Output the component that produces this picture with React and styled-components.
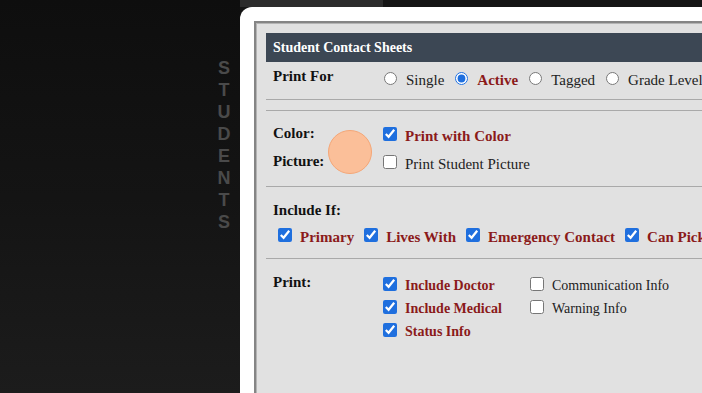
import React from "react";
import styled, { createGlobalStyle } from "styled-components";

const GlobalStyle = createGlobalStyle`
  html, body { margin: 0; padding: 0; background: #131313; overflow: hidden; }
  #root { height: 100vh; }
`;

const Page = styled.div`
  position: relative;
  display: flex;
  width: 702px;
  height: 393px;
  overflow: hidden;
  font-family: "Liberation Serif", "Times New Roman", serif;
`;

const Sidebar = styled.aside`
  width: 240px;
  flex: none;
  box-sizing: border-box;
  padding: 57px 6px 0 0;
  display: flex;
  flex-direction: column;
  align-items: flex-end;
  background: linear-gradient(180deg, #0e0e0e 0%, #141414 50%, #1c1c1c 100%);
`;

const VerticalLabel = styled.div`
  width: 20px;
  display: flex;
  flex-direction: column;
  align-items: center;
  font-family: "Liberation Sans", Arial, sans-serif;
  font-weight: 700;
  font-size: 18px;
  line-height: 22px;
  color: #4a4a4a;
`;

const Main = styled.main`
  flex: 1;
  min-width: 0;
  display: flex;
  flex-direction: column;
  background: #151515;
`;

const TopStrip = styled.div`
  height: 7px;
  flex: none;
  display: flex;
`;

const Tab = styled.div`
  width: 143px;
  background: #2c2c2c;
`;

const Window = styled.section`
  flex: 1;
  min-height: 0;
  display: flex;
  background: #ffffff;
  border-top-left-radius: 12px;
  padding: 14px 0 0 14px;
`;

const Panel = styled.div`
  flex: 1;
  min-width: 0;
  overflow: hidden;
  display: flex;
  flex-direction: column;
  background: #e1e1e1;
  border-left: 2px solid #858585;
  border-top: 2px solid #858585;
  box-shadow: inset 1px 1px 0 #b4b4b4;
  padding: 10px 0 0 10px;
`;

const Header = styled.h1`
  margin: 0;
  height: 29px;
  flex: none;
  display: flex;
  align-items: center;
  padding-left: 7px;
  background: #3c4754;
  color: #ffffff;
  font-size: 14px;
  font-weight: 700;
  white-space: nowrap;
`;

const FieldRow = styled.div`
  display: grid;
  grid-template-columns: 110px auto;
  align-items: start;
  padding: ${(p) => p.$pt ?? 0}px 0 ${(p) => p.$pb ?? 0}px 7px;
  white-space: nowrap;
`;

const Label = styled.div`
  font-size: 15px;
  line-height: 18px;
  font-weight: 700;
  color: #111111;
`;

const Options = styled.div`
  display: flex;
  gap: ${(p) => p.$gap ?? 10}px;
  padding-top: ${(p) => p.$offset ?? 0}px;
  padding-left: ${(p) => p.$indent ?? 0}px;
  white-space: nowrap;
`;

const Column = styled.div`
  display: flex;
  flex-direction: column;
  gap: 5px;
  width: ${(p) => (p.$width ? `${p.$width}px` : "auto")};
  flex: none;
`;

const Option = styled.label`
  display: inline-flex;
  align-items: flex-start;
  gap: 8px;
  font-size: ${(p) => p.$size ?? 15}px;
  line-height: 18px;
  font-weight: ${(p) => (p.$em ? 700 : 400)};
  color: ${(p) => (p.$em ? "#8b1a1a" : "#222222")};
`;

const Radio = styled.input.attrs({ type: "radio" })`
  width: 13px;
  height: 13px;
  margin: 1px 1px 0 1px;
  flex: none;
  accent-color: #1f6fde;
`;

const Check = styled.input.attrs({ type: "checkbox" })`
  width: 14px;
  height: 14px;
  margin: 0;
  flex: none;
  accent-color: #1f6fde;
`;

const Divider = styled.hr`
  margin: ${(p) => p.$mt ?? 0}px 0 0 0;
  border: 0;
  border-top: 1px solid #a9a9a9;
  height: 0;
  flex: none;
`;

const Block = styled.div`
  padding: ${(p) => p.$pt ?? 0}px 0 ${(p) => p.$pb ?? 0}px 7px;
  white-space: nowrap;
`;

const ChoiceLine = styled(Options)`
  margin-top: 9px;
`;

const ClickMarker = styled.div`
  position: absolute;
  left: 328px;
  top: 130px;
  width: 44px;
  height: 44px;
  box-sizing: border-box;
  border-radius: 50%;
  background: #fbbf99;
  border: 1.5px solid #f5a676;
  pointer-events: none;
`;

const letters = "STUDENTS".split("");

export default function App() {
  return (
    <>
      <GlobalStyle />
      <Page>
        <Sidebar>
          <VerticalLabel>
            {letters.map((l, i) => (
              <span key={i}>{l}</span>
            ))}
          </VerticalLabel>
        </Sidebar>
        <Main>
          <TopStrip>
            <Tab />
          </TopStrip>
          <Window>
            <Panel>
              <Header>Student Contact Sheets</Header>

              <FieldRow $pt={5} $pb={10}>
                <Label>Print For</Label>
                <Options $offset={4} $gap={10}>
                  <Option>
                    <Radio name="printFor" />
                    Single
                  </Option>
                  <Option $em>
                    <Radio name="printFor" defaultChecked />
                    Active
                  </Option>
                  <Option>
                    <Radio name="printFor" />
                    Tagged
                  </Option>
                  <Option>
                    <Radio name="printFor" />
                    Grade Level
                  </Option>
                </Options>
              </FieldRow>
              <Divider />
              <Divider $mt={10} />

              <FieldRow $pt={13}>
                <Label>Color:</Label>
                <Options $offset={3}>
                  <Option $em>
                    <Check defaultChecked />
                    Print with Color
                  </Option>
                </Options>
              </FieldRow>
              <FieldRow $pt={7} $pb={13}>
                <Label>Picture:</Label>
                <Options $offset={3}>
                  <Option>
                    <Check />
                    Print Student Picture
                  </Option>
                </Options>
              </FieldRow>
              <Divider />

              <Block $pt={14} $pb={12}>
                <Label>Include If:</Label>
                <ChoiceLine $indent={5} $gap={10}>
                  <Option $em>
                    <Check defaultChecked />
                    Primary
                  </Option>
                  <Option $em>
                    <Check defaultChecked />
                    Lives With
                  </Option>
                  <Option $em>
                    <Check defaultChecked />
                    Emergency Contact
                  </Option>
                  <Option $em>
                    <Check defaultChecked />
                    Can Pick Up
                  </Option>
                </ChoiceLine>
              </Block>
              <Divider />

              <FieldRow $pt={14}>
                <Label>Print:</Label>
                <Options $offset={4} $gap={0}>
                  <Column $width={147}>
                    <Option $em $size={14}>
                      <Check defaultChecked />
                      Include Doctor
                    </Option>
                    <Option $em $size={14}>
                      <Check defaultChecked />
                      Include Medical
                    </Option>
                    <Option $em $size={14}>
                      <Check defaultChecked />
                      Status Info
                    </Option>
                  </Column>
                  <Column>
                    <Option $size={14}>
                      <Check />
                      Communication Info
                    </Option>
                    <Option $size={14}>
                      <Check />
                      Warning Info
                    </Option>
                  </Column>
                </Options>
              </FieldRow>
            </Panel>
          </Window>
        </Main>
        <ClickMarker />
      </Page>
    </>
  );
}
